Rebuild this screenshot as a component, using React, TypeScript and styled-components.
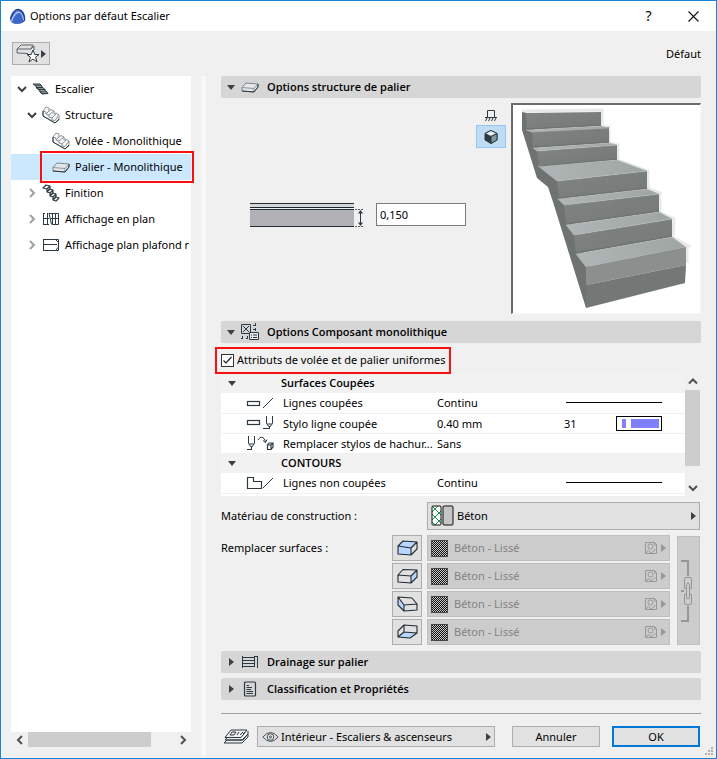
import React from "react";
import styled, { createGlobalStyle, css } from "styled-components";

const ink = "#2b3a42";

const GlobalStyle = createGlobalStyle`
  * { box-sizing: border-box; }
  body { margin: 0; background: #f0f0f0; }
  body, button, input {
    font-family: "Noto Sans", "Open Sans", sans-serif;
    font-size: 11px;
    line-height: 16px;
    color: #000;
  }
  button { padding: 0; border: 0; background: none; text-align: left; }
  svg { display: block; flex: none; }
`;

const Window = styled.div`
  display: flex;
  flex-direction: column;
  min-height: 100vh;
  border: 1px solid #1883d7;
  background: #f0f0f0;
  position: relative;
`;

const TitleBar = styled.header`
  display: flex;
  align-items: center;
  height: 30px;
  padding-left: 8px;
  background: #fff;
`;

const Title = styled.h1`
  flex: 1;
  margin: 0 0 0 4px;
  font-family: "Noto Sans", "Open Sans", sans-serif;
  font-size: 11px;
  font-weight: 400;
`;

const CaptionButton = styled.button`
  display: flex;
  align-items: center;
  justify-content: center;
  width: 45px;
  height: 30px;
  font-size: 14px;
`;

const Toolbar = styled.div`
  display: flex;
  align-items: center;
  justify-content: space-between;
  height: 45px;
  padding: 0 15px 0 11px;
`;

const FavoriteButton = styled.button`
  display: flex;
  align-items: center;
  justify-content: space-between;
  width: 38px;
  height: 23px;
  padding: 0 3px;
  border: 1px solid #adadad;
  background: #e1e1e1;
`;

const Body = styled.div`
  display: flex;
  flex: 1;
`;

const Sidebar = styled.nav`
  display: flex;
  flex-direction: column;
  flex: 0 0 180px;
  min-width: 0;
  margin: 0 10px 11px;
`;

const Tree = styled.ul`
  flex: 1;
  margin: 0;
  padding: 0;
  list-style: none;
  background: #fff;
`;

const TreeItem = styled.li<{ $level: number; $selected?: boolean }>`
  position: relative;
  display: flex;
  align-items: center;
  height: 26px;
  padding-left: ${(p) => 6 + p.$level * 10}px;
  background: ${(p) => (p.$selected ? "#cce8ff" : "transparent")};
`;

const Toggle = styled.button`
  flex: none;
  width: 12px;
  height: 16px;
  margin-right: 3px;
  display: flex;
  align-items: center;
`;

const TreeLabel = styled.button`
  display: flex;
  align-items: center;
  flex: 1;
  gap: 5px;
  min-width: 0;
  overflow: hidden;
  white-space: nowrap;
`;

const Highlight = styled.span<{ $inset: string }>`
  position: absolute;
  inset: ${(p) => p.$inset};
  border: 2px solid #f81010;
  pointer-events: none;
`;

const HorizontalScroll = styled.div`
  display: flex;
  align-items: center;
  height: 15px;
`;

const ScrollButton = styled.button`
  display: flex;
  align-items: center;
  justify-content: center;
  width: 17px;
  height: 17px;
`;

const HorizontalTrack = styled.div`
  flex: 1;
  height: 15px;
`;

const HorizontalThumb = styled.div`
  width: 84%;
  height: 15px;
  background: #cdcdcd;
`;

const Splitter = styled.div`
  flex: 0 0 5px;
  background: #f8f8f8;
`;

const Main = styled.main`
  flex: 1;
  min-width: 0;
  display: flex;
  flex-direction: column;
  padding: 0 15px 11px;
`;

const PanelHeader = styled.button<{ $spaced?: boolean }>`
  display: flex;
  align-items: center;
  width: 100%;
  height: 22px;
  padding-left: 5px;
  margin-top: ${(p) => (p.$spaced ? 5 : 0)}px;
  border-radius: 2px;
  background: #d6d6d6;
  font-family: "Open Sans", sans-serif;
  font-weight: 600;
`;

const HeaderArrow = styled.span`
  display: flex;
  justify-content: center;
  width: 10px;
  margin-right: 5px;
`;

const HeaderIcon = styled.span`
  display: flex;
  width: 20px;
  margin-right: 6px;
`;

const Structure = styled.section`
  display: flex;
  gap: 5px;
  padding: 5px 0 7px 29px;
`;

const ThicknessField = styled.label`
  display: flex;
  flex: 1;
  align-items: center;
  gap: 12px;
  padding-top: 12px;
`;

const NumberInput = styled.input`
  width: 90px;
  height: 23px;
  padding: 0 3px;
  border: 1px solid #7a7a7a;
  background: #fff;
`;

const ViewModes = styled.div`
  width: 30px;
`;

const ViewMode = styled.button<{ $active?: boolean }>`
  display: flex;
  align-items: center;
  justify-content: center;
  width: 30px;
  height: ${(p) => (p.$active ? 23 : 22)}px;
  ${(p) =>
    p.$active &&
    css`
      border: 1px solid #92c8f5;
      background: #c0dcf3;
    `}
`;

const Preview = styled.div`
  border: 1px solid #f8f8f8;
  border-top: 2px solid #6a6a6a;
  border-left: 2px solid #6a6a6a;
  background: #fff;
`;

const UniformLabel = styled.label`
  position: relative;
  display: flex;
  align-items: center;
  align-self: flex-start;
  gap: 3px;
  height: 26px;
  margin-top: 4px;
`;

const Check = styled.input`
  appearance: none;
  width: 13px;
  height: 13px;
  margin: 0;
  border: 1px solid #333;
  background: #fff
    url("data:image/svg+xml,%3Csvg xmlns='http://www.w3.org/2000/svg' viewBox='0 0 11 11'%3E%3Cpath d='M1.5 5.5l2.5 2.5l5.5-6' fill='none' stroke='%23222' stroke-width='1.2'/%3E%3C/svg%3E");
`;

const ListBox = styled.div`
  display: flex;
  height: 123px;
  overflow: hidden;
`;

const ListTable = styled.table`
  flex: 1;
  width: 0;
  height: 140px;
  table-layout: fixed;
  border-collapse: collapse;
  background: #fff;
`;

const GroupRow = styled.tr`
  height: 20px;
  background: #f2f2f2;
  text-align: left;
`;

const GroupCell = styled.th`
  padding: 0 0 0 7px;
`;

const GroupToggle = styled.button`
  display: flex;
  align-items: center;
  gap: 45px;
  font-family: "Open Sans", sans-serif;
  font-weight: 600;
`;

const Row = styled.tr`
  height: 20px;
  border-bottom: 1px solid #f0f0f0;
`;

const Cell = styled.td<{ $indent?: number }>`
  height: 20px;
  padding: 0 0 0 ${(p) => p.$indent ?? 0}px;
  white-space: nowrap;
  line-height: 19px;
`;

const LineSample = styled.div`
  height: 1px;
  margin: 0 23px 0 2px;
  background: #000;
`;

const PenValue = styled.div`
  display: flex;
  align-items: center;
  justify-content: space-between;
  height: 17px;
  margin-right: 23px;
`;

const PenSample = styled.div`
  display: grid;
  grid-template-columns: 4px 1fr;
  gap: 5px;
  width: 46px;
  height: 15px;
  margin-left: auto;
  padding: 2px 2px 2px 5px;
  border: 1px solid #000;
`;

const PenBar = styled.span`
  background: #8080ff;
`;

const VerticalScroll = styled.div`
  display: flex;
  flex-direction: column;
  align-items: center;
  justify-content: space-between;
  width: 15px;
  margin-right: 1px;
`;

const VerticalThumb = styled.div`
  width: 15px;
  height: 76px;
  margin-bottom: auto;
  background: #cdcdcd;
`;

const Field = styled.div`
  display: flex;
  align-items: center;
  height: 28px;
  margin: 6px 1px 5px 0;
`;

const FieldName = styled.span`
  flex: 0 0 206px;
`;

const Picker = styled.button`
  display: flex;
  align-items: center;
  flex: 1;
  gap: 3px;
  height: 28px;
  padding: 0 3px;
  border: 1px solid #adadad;
  background: #e1e1e1;
`;

const Grow = styled.span`
  flex: 1;
`;

const Surfaces = styled.div`
  display: flex;
  margin: 0 1px 6px 0;
`;

const SurfacesName = styled.span`
  flex: 0 0 171px;
  padding-top: 5px;
`;

const SurfaceRows = styled.div`
  display: grid;
  grid-template-columns: 30px 1fr;
  gap: 2px 5px;
  flex: 1;
`;

const SurfaceToggle = styled.button`
  display: flex;
  align-items: center;
  justify-content: center;
  height: 26px;
  border: 1px solid #adadad;
  background: #e1e1e1;
`;

const SurfacePicker = styled.button`
  display: flex;
  align-items: center;
  height: 26px;
  padding: 0 3px;
  border: 1px solid #bfbfbf;
  background: #ccc;
  color: #838383;
`;

const SurfaceName = styled.span`
  flex: 1;
  margin-left: 6px;
`;

const PickerArrow = styled.span`
  margin-left: 4px;
`;

const LinkButton = styled.button`
  display: flex;
  align-items: center;
  width: 23px;
  margin: 1px 0 0 7px;
  padding-left: 3px;
  border: 1px solid #bfbfbf;
  background: #ccc;
`;

const Footer = styled.footer`
  display: flex;
  align-items: center;
  margin-top: 13px;
  padding: 12px 1px 0 2px;
  border-top: 1px solid #a0a0a0;
`;

const LayerPicker = styled.button`
  display: flex;
  align-items: center;
  flex: 1;
  gap: 2px;
  height: 21px;
  margin: 0 17px 0 8px;
  padding: 0 3px 0 4px;
  border: 1px solid #adadad;
  background: #e1e1e1;
  white-space: nowrap;
`;

const PushButton = styled.button<{ $primary?: boolean }>`
  width: 88px;
  height: 21px;
  margin-left: ${(p) => (p.$primary ? 12 : 0)}px;
  border: ${(p) => (p.$primary ? "2px solid #0078d7" : "1px solid #adadad")};
  background: #e1e1e1;
  text-align: center;
  line-height: 17px;
`;

const Grip = styled.div`
  position: absolute;
  right: 2px;
  bottom: 2px;
`;

const Logo = () => (
  <svg width="17" height="17" viewBox="0 0 17 17">
    <defs>
      <linearGradient id="logo" x1="0" y1="0" x2="1" y2="1">
        <stop offset="0" stopColor="#a9c0f0" />
        <stop offset="0.5" stopColor="#4a72d0" />
        <stop offset="1" stopColor="#2348a8" />
      </linearGradient>
    </defs>
    <path d="M1 12C1 6 4 1 9.500 1C14.500 1.500 17 7 16 13C12 16.500 6 16.500 2.500 14.500Z" fill="url(#logo)" />
    <path d="M1.500 11C3.500 5 6.500 1.500 9.500 1.500C13 2 15.500 7 15.500 12" fill="none" stroke="#1b3f95" strokeWidth="1.400" />
    <path d="M4 15C5 9 8 5 10.500 5C13 6 14.500 10 14 14C11 16 7 16 4 15Z" fill="#3c66c8" />
    <path d="M2.500 13.500C4 8 7 4.500 10 4.200C12.500 4.500 14 8 14.500 12" fill="none" stroke="#dbe6fb" strokeWidth="0.900" />
  </svg>
);

const ArrowRight = ({ color = "#404040" }: { color?: string }) => (
  <svg width="5" height="8" viewBox="0 0 5 8">
    <path d="M0 0L5 4L0 8Z" fill={color} />
  </svg>
);

const ArrowDown = () => (
  <svg width="8" height="5" viewBox="0 0 8 5">
    <path d="M0 0H8L4 5Z" fill="#404040" />
  </svg>
);

const Chevron = ({ dir, color = "#505050" }: { dir: "up" | "down" | "left" | "right"; color?: string }) => {
  const d = {
    up: "M1 6.500L5 2.500L9 6.500",
    down: "M1 3L5 7L9 3",
    left: "M7 1L3 5L7 9",
    right: "M3 1L7 5L3 9",
  }[dir];
  return (
    <svg width="10" height="10" viewBox="0 0 10 10">
      <path d={d} fill="none" stroke={color} strokeWidth="2" />
    </svg>
  );
};

const SlabIcon = () => (
  <svg width="18" height="18" viewBox="0 0 18 18" fill="none" stroke={ink} strokeLinejoin="round">
    <path d="M1 9.500L5 5L17 6V9L13 14L1 13Z" fill="#e4e6e7" stroke="#7b868b" />
    <path d="M1 9.500L13 10.500L17 6M13 10.500V14" stroke="#8a9499" />
    <path d="M1 13L13 14L17 9V6" />
  </svg>
);

const FlightIcon = () => (
  <svg width="18" height="18" viewBox="0 0 18 18" fill="none" stroke="#8a9499" strokeLinejoin="round">
    <path d="M1 5L4 1L7 2V5L9 3.500L12 5V8L14 7L17 9V14L13 17L1 10Z" fill="#f5f6f6" />
    <path d="M1 5L4 6V8L7 5M4 8L7 9L12 5M7 9V11L10 12L14 8M10 12V14L13 14.500L17 9" />
    <path d="M1 5V10L13 17L17 13" stroke={ink} />
  </svg>
);

const StairDarkIcon = () => (
  <svg width="18" height="18" viewBox="0 0 18 18" fill="none" stroke={ink} strokeLinejoin="round">
    <path d="M1 4H8L10 6H4ZM4 7.500H11L13 9.500H7ZM8 11H14L16 13.500H10Z" fill="#8b9498" />
    <path d="M4 6L4.500 8L7 10L8 12L10 14M10 6V7.500M13 9.500V11M16 13.500L10 14" />
  </svg>
);

const FinishIcon = () => (
  <svg width="18" height="18" viewBox="0 0 18 18" fill="none" stroke={ink} strokeWidth="1.200" strokeLinejoin="round">
    <path d="M1 4L4 1L8 2L5 5ZM5 5V8L8 4.500V2M5 8L8 5L11 6L8 9ZM8 9V12L11 8.500V6M8 12L11 9L14 10L11 13ZM11 13V16L14 12.500V10M11 16L14 13L17 14L14 17Z" fill="#fff" />
  </svg>
);

const PlanIcon = () => (
  <svg width="18" height="14" viewBox="0 0 18 14" fill="none" stroke={ink}>
    <path d="M1.500 1V12.500M5.500 1V12.500M1 1.500H3M1.500 6.500H7M1 12.500H7M7 1L9.500 12.500M10.500 1V12.500H16.500V1.500H7M13.500 1.500V12.500M8 6.500H17" />
  </svg>
);

const CeilingIcon = () => (
  <svg width="18" height="14" viewBox="0 0 18 14" fill="none" stroke={ink}>
    <path d="M1 1.500H16.500V12.500H1M1.500 1V13M1 6.500H15M14 2L16 4M14 12L16 9.500" />
  </svg>
);

const FavoriteIcon = () => (
  <svg width="25" height="20" viewBox="0 0 25 20" fill="none" stroke="#59656b" strokeLinejoin="round">
    <path d="M1 5L5 1H17L15 5ZM1 5V9L12 9.500M15 5L18 2V6" />
    <path d="M17 6L18.800 10.500H23L19.600 13.200L21 18L17 15L13 18L14.400 13.200L11 10.500H15.200Z" fill="#fff" stroke={ink} />
  </svg>
);

const CompositeIcon = () => (
  <svg width="18" height="18" viewBox="0 0 18 18" fill="none" stroke={ink}>
    <path d="M0.500 1.500H9.500V10.500H0.500ZM2 3L8 9M8 3L2 9" />
    <path d="M8.500 9.500H17.500V16.500H8.500ZM10 12H11M12 12H16M10 14.500H11M12 14.500H16" fill="#e8e8e8" />
    <path d="M0 15.500H2M5 15.500H7M12 2.500H14M12 6.500H14M14.500 0V3M14.500 5V8M1.500 13V16M6.500 13V16" />
  </svg>
);

const DrainIcon = () => (
  <svg width="18" height="14" viewBox="0 0 18 14" fill="none" stroke={ink}>
    <path d="M1.500 1V13M1 2.500H14M1 5.500H14M1 8.500H14M1 11.500H14M13.500 1V12M16.500 1V13M13.500 1.500H17" />
  </svg>
);

const DocumentIcon = () => (
  <svg width="18" height="16" viewBox="0 0 18 16" fill="none" stroke={ink}>
    <rect x="3.500" y="1" width="11" height="14" rx="1" strokeWidth="1.200" />
    <path d="M5.500 4.500H8M5.500 6.500H11M5.500 8.500H10M5.500 10.500H12M5.500 12.500H12" />
  </svg>
);

const CutLineIcon = () => (
  <svg width="28" height="14" viewBox="0 0 28 14" fill="none" stroke={ink}>
    <rect x="1.500" y="5.500" width="12" height="4" strokeWidth="1.200" />
    <path d="M17 12L27 2" />
  </svg>
);

const Pen = ({ x }: { x: number }) => (
  <g transform={`translate(${x} 0)`}>
    <path d="M1.500 0V7.500L4.500 11.500L7.500 7.500V0M2 8H7M4.500 10V13" />
  </g>
);

const CutPenIcon = () => (
  <svg width="28" height="14" viewBox="0 0 28 14" fill="none" stroke={ink}>
    <rect x="1.500" y="4.500" width="12" height="4" strokeWidth="1.200" />
    <path d="M17 12.500H23" />
    <Pen x={19} />
  </svg>
);

const HatchPenIcon = () => (
  <svg width="28" height="14" viewBox="0 0 28 14" fill="none" stroke={ink}>
    <Pen x={1} />
    <path d="M1 13.500H6M12 4C14 0 18 0 19.500 6M17 4.500L19.500 6.500L21 3.500" />
    <path d="M21.500 9L23 7H27V11L25 13.500H21.500ZM21.500 9H25V13.500M25 9L27 7" strokeWidth="1.200" />
  </svg>
);

const UncutIcon = () => (
  <svg width="28" height="14" viewBox="0 0 28 14" fill="none" stroke={ink}>
    <path d="M1.500 1.500H7.500V5.500H15.500V12.500H1.500Z" strokeWidth="1.200" />
    <path d="M17 12L27 2" />
  </svg>
);

const SlabSection = () => (
  <svg width="114" height="26" viewBox="0 0 114 26">
    <rect y="1" width="104" height="5" fill="#d8d8da" />
    <rect y="7" width="104" height="17" fill="#b1b0b5" />
    <path d="M0 1.500H104M0 5.500H104M0 7.500H104M0 24.500H104" stroke="#202c33" />
    <path d="M105 7.500H113M105 24.500H113" stroke="#55606a" strokeDasharray="2 1" />
    <path d="M110.500 10V22" stroke={ink} />
    <path d="M108 11.500L110.500 8L113 11.500ZM108 20.500L110.500 24L113 20.500Z" fill={ink} />
  </svg>
);

const SectionViewIcon = () => (
  <svg width="12" height="14" viewBox="0 0 12 14" fill="none" stroke={ink}>
    <path d="M2.500 3.500H9.500V10M2.500 3.500V10M0 10.500H12M2 11L0.500 14M5 11L3.500 14M8 11L6.500 14M11 11L9.500 14" />
  </svg>
);

const CubeIcon = () => (
  <svg width="14" height="16" viewBox="0 0 14 16" stroke={ink} strokeLinejoin="round">
    <path d="M1 4.500L7 1.500L13 4.500V11L7 14.500L1 11Z" fill={ink} />
    <path d="M1 4.500L7 1.500L13 4.500L7 7.500Z" fill="#e8f0f6" />
    <path d="M7 7.500L13 4.500V11L7 14.500Z" fill="#8595a0" />
  </svg>
);

const HatchSwatch = () => (
  <svg width="23" height="22" viewBox="0 0 23 22">
    <defs>
      <pattern id="cross" width="8" height="8" patternUnits="userSpaceOnUse">
        <path d="M0 0L8 8M8 0L0 8" stroke="#159050" />
      </pattern>
    </defs>
    <rect x="1" y="1" width="9" height="19" rx="1" fill="#fff" />
    <rect x="1" y="1" width="9" height="19" rx="1" fill="url(#cross)" stroke="#111" />
    <rect x="12" y="1" width="10" height="19" rx="1" fill="#c6c6c6" stroke="#111" />
  </svg>
);

const DotSwatch = () => (
  <svg width="17" height="17" viewBox="0 0 17 17">
    <defs>
      <pattern id="dots" width="2" height="2" patternUnits="userSpaceOnUse">
        <rect width="2" height="2" fill="#c8c8c8" />
        <rect width="1" height="1" fill="#111" />
        <rect x="1" y="1" width="1" height="1" fill="#111" />
      </pattern>
    </defs>
    <rect width="17" height="17" rx="1" fill="url(#dots)" />
    <rect x="0.500" y="0.500" width="16" height="16" rx="1" fill="none" stroke="#444" />
  </svg>
);

const TextureIcon = () => (
  <svg width="12" height="12" viewBox="0 0 12 12" fill="none" stroke="#96989a">
    <path d="M0.500 0.500H9.500L11.500 2.500V11.500H0.500ZM9.500 0.500V3H11.500M1 11L3.500 8L6 11L10 7.500L11 8.500" />
    <circle cx="5.500" cy="4.500" r="2.500" />
  </svg>
);

type Face = { fill: string; lines: string };

const faces: Record<string, Face> = {
  "Surface supérieure": {
    fill: "M1 6L6 1L20 2L14 8L14 15L1 14Z",
    lines: "M1 6L6 1L20 2V9L14 15L1 14ZM1 6L14 8L20 2M14 8V15",
  },
  "Surface droite": {
    fill: "M14 8L20 2V9L14 15Z",
    lines: "M1 7L6 1.500L20 2V9L14 15L1 14ZM1 7L14 8L20 2M14 8V15",
  },
  "Surface gauche": {
    fill: "M1 1L7 9V15L1 9Z",
    lines: "M1 1L15 2L20 8V14L7 15L1 9ZM1 1L7 9L20 8M7 9V15",
  },
  "Surface inférieure": {
    fill: "M1 13L7 8L20 9L13 14Z",
    lines: "M7 1L20 2V9L13 14L1 13V7ZM7 1V8L20 9M7 8L1 13",
  },
};

const FaceIcon = ({ fill, lines }: Face) => (
  <svg width="21" height="16" viewBox="0 0 21 16" strokeLinejoin="round">
    <path d={fill} fill="#b8d6ff" />
    <path d={lines} fill="none" stroke="#1f2b31" strokeWidth="1.100" />
  </svg>
);

const ChainIcon = () => (
  <svg width="14" height="64" viewBox="0 0 14 64" fill="none" stroke="#93979b">
    <path d="M0 2H7V17M0 62H7V47M0 32H3" strokeWidth="2" />
    <path d="M6 29.500H3.500V20Q3.500 18.500 5 18.500H9Q10.500 18.500 10.500 20V29.500H8.500M6 35.500H3.500V44Q3.500 45.500 5 45.500H9Q10.500 45.500 10.500 44V35.500H8.500" />
    <path d="M5.500 38V26Q5.500 24 7 24Q8.500 24 8.500 26V38Q8.500 40 7 40Q5.500 40 5.500 38" />
  </svg>
);

const LayersIcon = () => (
  <svg width="26" height="15" viewBox="0 0 26 15" fill="none" stroke={ink} strokeLinejoin="round">
    <path d="M1 14L4 11H20L25 5M1 14H19L25 8V5M2 11L5 8M2 11H19L25 5L25 2M2 8.500H18L24 1H8Z" />
    <path d="M7 6L9 3H13L11 6ZM14 6L16 3M17 6L20 3M20 5L22 3" />
  </svg>
);

const EyeIcon = () => (
  <svg width="17" height="12" viewBox="0 0 17 12" fill="none" stroke="#4a555b">
    <path d="M0.800 6Q8.500 -3 16.200 6Q8.500 15 0.800 6Z" />
    <circle cx="8.500" cy="6" r="3.300" />
    <circle cx="8.500" cy="6" r="1" />
  </svg>
);

const CloseIcon = () => (
  <svg width="11" height="11" viewBox="0 0 11 11">
    <path d="M0.500 0.500L10.500 10.500M10.500 0.500L0.500 10.500" stroke="#111" strokeWidth="1.100" />
  </svg>
);

const risers = [
  "526,113 601,112 601,126 527,130",
  "532,131 609,127 609,143 533,148",
  "537,151 617,145 617,160 539,166",
  "557,181 647,171 647,189 559,199",
  "564,205 659,194 659,212 566,225",
  "574,235 672,219 672,237 576,254",
];

const treads = [
  "526,130 601,126 609,128 532,132",
  "533,148 609,143 617,145 537,151",
  "538,166 617,160 647,171 557,181",
  "558,199 647,189 659,194 564,205",
  "566,225 659,212 672,219 574,235",
  "576,254 672,237 686,247 586,267",
];

const edges = [
  "522,111 602,110 602,126",
  "601,126 609,127 609,143",
  "609,143 618,145 618,160",
  "617,160 648,171 648,188",
  "647,188 660,193 660,212",
  "659,212 674,219 673,237",
  "672,237 689,246 687,248 687,263",
];

const nosings = [
  "527,129 601,125",
  "533,147 609,142",
  "539,166 617,159",
  "559,198 647,188",
  "566,224 659,211",
  "576,253 672,236",
];

const StairPreview = () => (
  <svg width="187" height="208" viewBox="513 105 187 208" role="img" aria-label="Aperçu de l’escalier">
    <defs>
      <linearGradient id="riser" x1="0" y1="0" x2="1" y2="1">
        <stop offset="0" stopColor="#808482" />
        <stop offset="1" stopColor="#747876" />
      </linearGradient>
      <linearGradient id="tread" x1="0" y1="0" x2="1" y2="0">
        <stop offset="0" stopColor="#b0b6b5" />
        <stop offset="1" stopColor="#9fa5a3" />
      </linearGradient>
    </defs>
    {edges.map((p) => (
      <polyline key={p} points={p} fill="none" stroke="#e8eae9" strokeWidth="3" />
    ))}
    <polygon points="522,112 522,130 537,178 548,187 553,202 586,308 590,267 579,240 572,225 568,200 558,180 542,166 540,151 535,132 527,113" fill="#6e7270" />
    {risers.map((p) => (
      <polygon key={p} points={p} fill="url(#riser)" />
    ))}
    {treads.map((p) => (
      <polygon key={p} points={p} fill="url(#tread)" stroke="#b6bbba" strokeWidth="0.500" />
    ))}
    {nosings.map((p) => (
      <polyline key={p} points={p} fill="none" stroke="#6d716f" />
    ))}
    <polygon points="586,267 686,247 686,265 586,285" fill="#8b8f8d" />
    <polygon points="586,285 686,265 685,283 586,308" fill="#737775" />
  </svg>
);

type Node = { name: string; level: number; icon: React.ReactNode; open?: boolean; selected?: boolean };

const nodes: Node[] = [
  { name: "Escalier", level: 0, icon: <StairDarkIcon />, open: true },
  { name: "Structure", level: 1, icon: <FlightIcon />, open: true },
  { name: "Volée - Monolithique", level: 2, icon: <FlightIcon /> },
  { name: "Palier - Monolithique", level: 2, icon: <SlabIcon />, selected: true },
  { name: "Finition", level: 1, icon: <FinishIcon />, open: false },
  { name: "Affichage en plan", level: 1, icon: <PlanIcon />, open: false },
  { name: "Affichage plan plafond r", level: 1, icon: <CeilingIcon />, open: false },
];

const Panel = ({ title, icon, open, spaced }: { title: string; icon: React.ReactNode; open?: boolean; spaced?: boolean }) => (
  <PanelHeader type="button" aria-expanded={!!open} $spaced={spaced}>
    <HeaderArrow>{open ? <ArrowDown /> : <ArrowRight />}</HeaderArrow>
    <HeaderIcon>{icon}</HeaderIcon>
    {title}
  </PanelHeader>
);

const Group = ({ name }: { name: string }) => (
  <GroupRow>
    <GroupCell colSpan={4}>
      <GroupToggle type="button" aria-expanded>
        <ArrowDown />
        {name}
      </GroupToggle>
    </GroupCell>
  </GroupRow>
);

const Attribute = ({ icon, name, value, children }: { icon?: React.ReactNode; name?: string; value?: string; children?: React.ReactNode }) => (
  <Row>
    <Cell $indent={25}>{icon}</Cell>
    <Cell>{name}</Cell>
    <Cell>{value}</Cell>
    <Cell>{children}</Cell>
  </Row>
);

const PenRowValue = ({ pen }: { pen?: number }) => (
  <PenValue>
    {pen}
    <PenSample>
      <PenBar />
      <PenBar />
    </PenSample>
  </PenValue>
);

export default function App() {
  return (
    <Window>
      <GlobalStyle />
      <TitleBar>
        <Logo />
        <Title>Options par défaut Escalier</Title>
        <CaptionButton type="button" aria-label="Aide">?</CaptionButton>
        <CaptionButton type="button" aria-label="Fermer"><CloseIcon /></CaptionButton>
      </TitleBar>
      <Toolbar>
        <FavoriteButton type="button" aria-label="Favoris">
          <FavoriteIcon />
          <ArrowRight />
        </FavoriteButton>
        <span>Défaut</span>
      </Toolbar>
      <Body>
        <Sidebar>
          <Tree>
            {nodes.map((n) => (
              <TreeItem key={n.name} $level={n.level} $selected={n.selected}>
                {n.open === undefined ? (
                  <Toggle as="span" />
                ) : (
                  <Toggle type="button" aria-label={n.name} aria-expanded={n.open}>
                    <Chevron dir={n.open ? "down" : "right"} color={n.open ? "#404040" : "#a0a0a0"} />
                  </Toggle>
                )}
                <TreeLabel type="button">
                  {n.icon}
                  {n.name}
                </TreeLabel>
                {n.selected && <Highlight $inset="-3px -3px -3px 29px" />}
              </TreeItem>
            ))}
          </Tree>
          <HorizontalScroll>
            <ScrollButton type="button" aria-label="Défiler à gauche"><Chevron dir="left" /></ScrollButton>
            <HorizontalTrack><HorizontalThumb /></HorizontalTrack>
            <ScrollButton type="button" aria-label="Défiler à droite"><Chevron dir="right" /></ScrollButton>
          </HorizontalScroll>
        </Sidebar>
        <Splitter />
        <Main>
          <Panel title="Options structure de palier" icon={<SlabIcon />} open />
          <Structure>
            <ThicknessField>
              <SlabSection />
              <NumberInput type="text" defaultValue="0,150" aria-label="Épaisseur" />
            </ThicknessField>
            <ViewModes>
              <ViewMode type="button" aria-label="Vue en coupe"><SectionViewIcon /></ViewMode>
              <ViewMode type="button" aria-label="Vue 3D" $active><CubeIcon /></ViewMode>
            </ViewModes>
            <Preview><StairPreview /></Preview>
          </Structure>
          <Panel title="Options Composant monolithique" icon={<CompositeIcon />} open />
          <UniformLabel>
            <Check type="checkbox" defaultChecked />
            Attributs de volée et de palier uniformes
            <Highlight $inset="0 -6px -1px -6px" />
          </UniformLabel>
          <ListBox>
            <ListTable>
              <colgroup>
                <col style={{ width: 62 }} />
                <col style={{ width: 154 }} />
                <col />
                <col style={{ width: 121 }} />
              </colgroup>
              <tbody>
                <Group name="Surfaces Coupées" />
                <Attribute icon={<CutLineIcon />} name="Lignes coupées" value="Continu"><LineSample /></Attribute>
                <Attribute icon={<CutPenIcon />} name="Stylo ligne coupée" value="0.40 mm"><PenRowValue pen={31} /></Attribute>
                <Attribute icon={<HatchPenIcon />} name="Remplacer stylos de hachur..." value="Sans" />
                <Group name="CONTOURS" />
                <Attribute icon={<UncutIcon />} name="Lignes non coupées" value="Continu"><LineSample /></Attribute>
                <Attribute><PenRowValue /></Attribute>
              </tbody>
            </ListTable>
            <VerticalScroll>
              <ScrollButton type="button" aria-label="Défiler vers le haut"><Chevron dir="up" /></ScrollButton>
              <VerticalThumb />
              <ScrollButton type="button" aria-label="Défiler vers le bas"><Chevron dir="down" /></ScrollButton>
            </VerticalScroll>
          </ListBox>
          <Field>
            <FieldName>Matériau de construction :</FieldName>
            <Picker type="button" aria-haspopup="listbox">
              <HatchSwatch />
              Béton
              <Grow />
              <ArrowRight />
            </Picker>
          </Field>
          <Surfaces>
            <SurfacesName>Remplacer surfaces :</SurfacesName>
            <SurfaceRows>
              {Object.entries(faces).map(([name, face]) => (
                <React.Fragment key={name}>
                  <SurfaceToggle type="button" aria-label={name}><FaceIcon {...face} /></SurfaceToggle>
                  <SurfacePicker type="button" disabled>
                    <DotSwatch />
                    <SurfaceName>Béton - Lissé</SurfaceName>
                    <TextureIcon />
                    <PickerArrow><ArrowRight color="#96989a" /></PickerArrow>
                  </SurfacePicker>
                </React.Fragment>
              ))}
            </SurfaceRows>
            <LinkButton type="button" aria-label="Lier les surfaces" disabled><ChainIcon /></LinkButton>
          </Surfaces>
          <Panel title="Drainage sur palier" icon={<DrainIcon />} />
          <Panel title="Classification et Propriétés" icon={<DocumentIcon />} spaced />
          <Footer>
            <LayersIcon />
            <LayerPicker type="button" aria-haspopup="listbox">
              <EyeIcon />
              Intérieur - Escaliers &amp; ascenseurs
              <Grow />
              <ArrowRight />
            </LayerPicker>
            <PushButton type="button">Annuler</PushButton>
            <PushButton type="submit" $primary>OK</PushButton>
          </Footer>
        </Main>
      </Body>
      <Grip>
        <svg width="10" height="10" viewBox="0 0 10 10" fill="#b0b0b0">
          <path d="M7 1h2v2h-2zM4 4h2v2h-2zM7 4h2v2h-2zM1 7h2v2h-2zM4 7h2v2h-2zM7 7h2v2h-2z" />
        </svg>
      </Grip>
    </Window>
  );
}
